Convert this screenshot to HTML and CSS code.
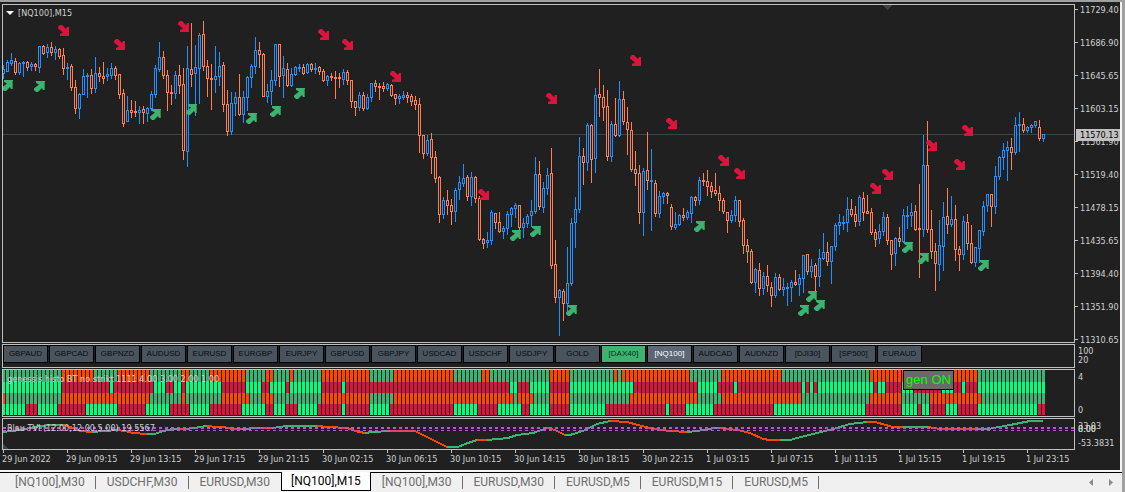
FILE: index.html
```html
<!DOCTYPE html>
<html lang="en">
<head>
<meta charset="utf-8">
<title>[NQ100],M15</title>
<link rel="stylesheet" href="styles.css">
</head>
<body>
<div class="terminal">
  <main class="chart">
    <section class="panel price-panel">
      <svg class="plot" id="price"></svg>
      <h1 class="caption price-caption"><svg class="caret" viewBox="0 0 8 4"><path d="M0 0h8L4 4z"/></svg>[NQ100],M15</h1>
    </section>
    <div class="axis price-axis">
      <span>11729.40</span><span>11686.90</span><span>11645.65</span><span>11603.15</span><span>11561.90</span><span>11519.40</span><span>11478.15</span><span>11435.65</span><span>11394.40</span><span>11351.90</span><span>11310.65</span>
      <output class="last-price">11570.13</output>
    </div>

    <nav class="panel symbols" id="symbols" aria-label="Symbols"></nav>
    <div class="axis symbol-axis"><span>100</span><span>20</span></div>

    <section class="panel">
      <svg class="plot" id="histo"></svg>
      <h2 class="caption">genessis histo BT no strikt 1111 4.00 3.00 2.00 1.00</h2>
      <button class="gen" type="button">gen ON</button>
    </section>
    <div class="axis histo-axis"><span>4</span><span>0</span></div>

    <section class="panel">
      <svg class="plot" id="tvi"></svg>
      <h2 class="caption tvi-caption">Blau TVI (12.00,12.00,5.00) 19.5567</h2>
    </section>
    <div class="axis tvi-axis"><span>33.03</span><span class="level">0.00</span><span class="level">8.00</span><span>-53.3831</span></div>

    <div class="dates" id="dates"></div>
  </main>

  <nav class="tabs" aria-label="Charts">
    <button type="button">[NQ100],M30</button>
    <button type="button">USDCHF,M30</button>
    <button type="button">EURUSD,M30</button>
    <button type="button" class="active" aria-current="page">[NQ100],M15</button>
    <button type="button">[NQ100],M30</button>
    <button type="button">EURUSD,M30</button>
    <button type="button">EURUSD,M5</button>
    <button type="button">EURUSD,M15</button>
    <button type="button">EURUSD,M5</button>
    <div class="scroll">
      <button type="button" aria-label="Scroll left"><svg viewBox="0 0 4 7"><path d="M4 0v7L0 3.500z"/></svg></button>
      <button type="button" aria-label="Scroll right"><svg viewBox="0 0 4 7"><path d="M0 0v7l4-3.500z"/></svg></button>
    </div>
  </nav>
</div>
<script src="chart.js"></script>
</body>
</html>
```
FILE: styles.css
```css
* { box-sizing: border-box; }

body {
  margin: 0;
  background: #a0a0a0;
  font-family: "Liberation Sans", Arial, sans-serif;
}

button {
  margin: 0;
  padding: 0;
  border: 0;
  border-radius: 0;
  background: none;
  font: inherit;
  color: inherit;
}

.terminal {
  display: flex;
  flex-direction: column;
  height: 100vh;
  border-top: 2px solid #a0a0a0;
  overflow: hidden;
}

.chart {
  flex: 1;
  min-height: 0;
  display: grid;
  grid-template-columns: minmax(0, 1fr) 45px;
  grid-template-rows: minmax(0, 1fr) 24px 48px 32px 19px;
  row-gap: 1px;
  margin-right: 3px;
  padding: 2px 0 0 2px;
  border-right: 2px solid #f4f4f4;
  border-bottom: 2px solid #f4f4f4;
  background: #202020;
  color: #d0d0d0;
  font-family: "DejaVu Sans Condensed", "DejaVu Sans", sans-serif;
  font-size: 9px;
  line-height: 12px;
}

.panel {
  position: relative;
  min-width: 0;
  border: 1px solid #c0c0c0;
  overflow: hidden;
}

.plot {
  display: block;
  width: 100%;
  height: 100%;
  shape-rendering: crispEdges;
}

.arrow { shape-rendering: auto; }

.caption {
  position: absolute;
  left: 4px;
  top: 3px;
  margin: 0;
  font-size: inherit;
  font-weight: normal;
  white-space: nowrap;
}

.price-caption {
  display: flex;
  align-items: center;
  gap: 4px;
  left: 3px;
  top: 2px;
}

.caret { width: 8px; height: 4px; fill: #ffffff; }

.axis {
  position: relative;
  display: flex;
  flex-direction: column;
  justify-content: space-between;
  padding-left: 3px;
  white-space: nowrap;
}

.price-axis { padding-left: 5px; margin-bottom: -3px; }

.price-axis span { position: relative; }

.price-axis span::before {
  content: "";
  position: absolute;
  left: -5px;
  top: 5px;
  width: 3px;
  height: 1px;
  background: #c0c0c0;
}

.last-price {
  position: absolute;
  left: 1px;
  right: 0;
  top: 125px;
  padding-left: 4px;
  background: #c0c0c0;
  color: #000000;
}

.symbol-axis { justify-content: center; line-height: 9px; }
.histo-axis { padding-top: 2px; padding-bottom: 1px; }
.tvi-axis { padding-top: 2px; padding-bottom: 1px; }
.level { position: absolute; top: 5px; }

.symbols {
  display: flex;
  align-items: flex-start;
  gap: 1px;
}

.symbols button {
  flex: none;
  width: 45px;
  height: 18px;
  border: 1px solid #000000;
  background: #4a545e;
  color: #080c10;
  font-family: "Liberation Sans", Arial, sans-serif;
  font-size: 8px;
}

.symbols .up { background: #3cb371; color: #0c2c1a; }
.symbols .current { background: #5b6775; color: #ffffff; }

.gen {
  position: absolute;
  left: 900px;
  top: 0;
  width: 51px;
  height: 20px;
  border: 1px solid #000000;
  background: #696969;
  color: #00ff00;
  font-family: "Liberation Sans", Arial, sans-serif;
  font-size: 13px;
}

.dates {
  grid-column: 1 / -1;
  display: flex;
  margin-top: -1px;
  overflow: hidden;
}

.dates span {
  position: relative;
  flex: none;
  width: 64px;
  padding-top: 3px;
  white-space: nowrap;
}

.dates span::before {
  content: "";
  position: absolute;
  left: 1px;
  top: 0;
  width: 1px;
  height: 3px;
  background: #c0c0c0;
}

.tabs {
  flex: none;
  display: flex;
  height: 20px;
  margin-right: 3px;
  padding-left: 4px;
  background: linear-gradient(#000000 1px, #f0f0f0 1px);
  color: #6d6d6d;
  font-family: Roboto, "Noto Sans", sans-serif;
  font-size: 12px;
  line-height: 18px;
}

.tabs > button {
  position: relative;
  flex: none;
  height: 19px;
  padding: 0 11px;
}

.tabs > button::after {
  content: "";
  position: absolute;
  right: 0;
  top: 4px;
  width: 1px;
  height: 13px;
  background: #6d6d6d;
}

.tabs > .active {
  padding: 0 9px;
  border: solid #000000;
  border-width: 0 1px 1px;
  background: #ffffff;
  color: #000000;
}

.tabs > .active::after,
.tabs > button:nth-child(3)::after { display: none; }

.scroll {
  display: flex;
  align-items: center;
  gap: 16px;
  margin-left: auto;
  padding-right: 9px;
}

.scroll button { display: flex; }
.scroll svg { width: 4px; height: 7px; fill: #8a8a8a; }
```
FILE: chart.js
```js
const BLUE = "#1e90ff";
const CORAL = "#ff7f50";
const SEA = "#3cb371";
const SPRING = "#00ff7f";
const ORANGE = "#ff4500";
const CRIMSON = "#dc143c";
const STEP = 4;

// One candle per entry: direction, high, body top, body bottom, low.
const candles = `
U65,69,73,78 U60,62,71,71 U53,60,63,65 D58,61,72,74 U62,63,72,74 U61,62,63,76 D61,62,67,70 U62,64,66,70
D63,64,66,70 U46,46,67,72 D45,46,53,54 U44,47,52,57 D42,47,52,55 U46,49,52,59 D48,49,56,58 D48,55,68,74
U63,67,68,79 D64,66,87,90 D80,87,108,113 U93,94,108,118 U69,76,94,94 U73,75,76,97 D69,75,88,93 U57,73,88,92
D67,73,76,81 D62,76,78,83 U68,74,76,80 U63,68,75,78 D66,68,75,79 D74,74,94,98 D89,93,123,126 U96,110,121,121
D100,110,112,117 D101,111,112,116 U106,110,112,123 D106,109,112,123 U107,108,113,121 U91,94,108,110 U65,68,94,97 U42,57,69,71
D51,57,75,78 D70,75,92,110 D85,92,93,104 U71,75,93,98 D65,75,85,93 D68,84,150,159 U46,68,151,166 D23,69,74,86
U45,67,73,115 U33,35,68,103 D21,34,66,70 D60,66,78,96 D64,78,79,109 U46,76,79,92 U52,66,76,85 D62,65,104,111
D90,104,131,135 U92,103,131,134 U92,97,103,115 D74,97,114,115 U91,97,114,122 U76,77,97,110 U64,66,77,87 U37,50,66,73
D42,50,54,67 D53,54,96,96 U84,91,96,102 U70,80,91,104 U44,44,80,85 D44,44,76,86 U56,68,75,97 D63,69,85,86
U68,74,85,86 U66,67,74,75 U64,67,68,71 D64,67,73,74 U63,64,72,73 D63,64,69,71 U63,68,69,73 D66,67,71,74
D69,71,80,81 U75,76,80,85 D73,76,77,80 D71,77,78,98 D73,77,78,87 U69,72,79,84 D70,72,80,84 D80,80,101,107
D101,101,107,115 U92,95,107,110 D92,95,108,110 U94,97,108,109 U83,83,97,101 D80,83,86,91 D83,86,87,99 D82,86,88,91
U83,84,88,90 D84,85,95,96 D94,94,98,104 U94,96,98,103 U91,95,97,99 D92,95,97,102 D94,96,101,105 D96,100,104,109
D98,104,135,152 D135,135,153,158 U135,140,153,155 D133,139,157,173 D151,157,178,182 D176,177,214,222 U197,200,214,218 D190,200,205,214
D199,205,211,224 U188,190,211,221 U176,182,189,199 U164,178,183,186 D175,177,196,200 U172,177,196,205 D176,177,198,202 D196,198,239,240
D238,239,243,248 U232,240,242,247 U210,212,240,244 D213,213,222,228 D212,222,231,232 U226,228,231,238 U211,214,228,234 U207,208,214,226
U203,205,208,217 D205,205,227,230 U218,223,227,237 U214,216,223,227 U200,211,215,226 U157,174,211,213 D161,174,206,209 U182,188,207,212
U168,175,188,194 D148,173,265,268 D240,264,297,302 U289,290,297,335 D289,291,303,320 U247,283,303,312 U218,223,283,285 U197,209,222,247
U137,156,209,212 D148,156,162,184 U123,125,162,170 D124,125,159,182 U88,95,158,172 D69,94,97,116 D85,97,107,120 D90,106,156,160
U121,124,156,161 D98,124,135,136 U81,99,135,136 D91,99,121,124 D107,122,129,154 D122,130,169,171 D151,169,173,185 D165,173,212,223
U168,171,212,235 D132,170,180,189 U149,180,181,230 D180,183,213,216 U191,196,213,217 U192,193,196,203 D192,193,195,203 D204,207,226,229
U212,224,227,229 U214,215,224,225 D208,215,217,220 U210,212,217,219 U196,197,213,222 D196,197,200,205 U177,180,200,204 D173,180,181,185
D170,181,186,195 D182,186,191,197 D173,190,193,195 D186,193,200,210 D198,200,211,213 D212,212,220,232 U210,215,220,222 U196,200,215,221
D200,200,221,226 D218,220,245,253 D239,245,251,262 D249,251,282,283 U268,269,282,292 D263,270,288,295 U272,276,288,294 D265,276,285,291
D282,287,295,306 U273,277,295,297 D274,277,289,290 U278,287,289,295 U283,287,288,305 U280,282,287,301 D270,282,284,285 U274,278,284,295
U255,255,278,292 D254,254,271,274 U259,266,271,277 D263,265,276,292 U249,258,276,286 U233,252,258,259 D242,252,261,265 U246,246,261,283
U223,225,246,250 U214,222,225,234 U216,222,223,229 U197,209,222,231 D199,209,214,216 D206,214,221,226 U195,197,221,225 D192,198,212,220
D195,211,213,213 D208,212,232,234 D229,232,239,246 U224,231,238,243 U212,217,231,235 D214,217,240,244 D240,240,254,269 U237,238,253,265
D227,238,241,246 U209,215,241,242 U206,215,216,228 U203,212,215,226 D205,211,229,230 D184,228,229,277 U135,165,229,236 D121,165,229,232
D210,229,251,258 D243,251,263,290 U220,245,264,280 U202,217,246,270 D188,216,224,233 U196,219,224,226 D205,219,249,260 D246,249,254,270
U216,221,254,259 D214,222,243,249 D225,243,262,263 U247,247,262,266 U230,230,248,262 U201,206,231,235 U194,194,205,211 D194,194,206,226
U166,176,206,213 U156,157,176,179 U143,150,157,169 U141,147,150,180 D138,147,152,169 U117,125,152,154 U112,124,125,151 D118,124,130,132
U126,127,130,132 U124,125,127,132 U121,121,125,127 D120,127,138,140 U134,134,138,141
`.trim().split(/\s+/);

const sells = [[63,31],[119,45],[183,27],[323,35],[347,45],[395,77],[483,195],[551,99],[635,61],[671,124],[723,161],[739,174],[875,189],[887,175],[931,146],[959,165],[967,131]];
const buys = [[7,85],[39,86],[155,114],[191,109],[251,118],[275,111],[299,93],[515,235],[535,231],[571,310],[699,226],[803,310],[811,296],[819,305],[907,247],[923,258],[983,265]];

const rect = (x, y, w, h, fill) => `<rect x="${x}" y="${y}" width="${w}" height="${h}" fill="${fill}"/>`;

function drawPrice() {
  let out = rect(0, 134, 4000, 1, "#3a4444") + `<path d="M882 5h10l-5 5z" fill="#3a4444"/>`;
  candles.forEach((entry, k) => {
    const x = 3 + STEP * k;
    const color = entry[0] === "U" ? BLUE : CORAL;
    const [high, top, bottom, low] = entry.slice(1).split(",").map(Number);
    out += rect(x, high, 1, low - high + 1, color);
    out += rect(x - 1, top, 3, bottom - top + 1, color);
    if (bottom - top > 1) out += rect(x, top + 1, 1, bottom - top - 1, "#202020");
  });
  const down = "M0 2 2 0H4L8 4 9 2H11V11H2V9L5 7.5 0 3.5Z";
  const up = "M0 9 2 11H4L8 7 9 9H11V0H2V2L5 3.5 0 7.5Z";
  sells.forEach(([x, y]) => { out += `<path class="arrow" transform="translate(${x - 5} ${y - 6})" d="${down}" fill="${CRIMSON}"/>`; });
  buys.forEach(([x, y]) => {
    out += `<g class="arrow" transform="translate(${x - 5} ${y - 5})"><path d="${up}" fill="${SEA}"/><path d="M10 1h1v8h-1z" fill="#2e8b3c"/></g>`;
  });
  document.getElementById("price").innerHTML = `<g transform="translate(-3 -5)">${out}</g>`;
}

// Each row lists the bar index at which the colour flips.
const rows = [
  { y: 370, h: 12, colors: [SEA, ORANGE], flips: [0,15,23,29,37,45,47,52,61,66,68,72,73,80,92,98,113,120,122,137,142,153,154,155,172,180,195,217,244] },
  { y: 382, h: 11, colors: [SPRING, CRIMSON], flips: [0,15,27,28,38,41,43,45,46,55,61,65,67,71,72,80,85,86,127,129,132,137,142,158,174,179,183,184,200,201,202,203,204,218,219,221,225,228,235,238,240,241,244] },
  { y: 393, h: 11, colors: [SEA, ORANGE], flips: [0,0,1,15,37,45,46,55,62,65,68,80,92,98,128,129,133,137,142,157,174,180,200,217,225,232,245].slice(2), first: ORANGE },
  { y: 404, h: 11, colors: [SPRING, CRIMSON], flips: [0,6,9,14,21,29,36,42,47,52,60,66,68,71,74,79,85,86,92,97,113,119,124,130,132,137,142,151,166,167,171,178,193,216,225,229,230,232,236,239,244,259] }
];

function drawHisto() {
  let out = "";
  rows.forEach(({ y, h, colors, flips, first }) => {
    if (first) out += rect(2, y, 3, h, first);
    flips.forEach((start, i) => {
      const end = flips[i + 1] ?? candles.length;
      for (let k = start; k < end; k++) out += rect(2 + STEP * k, y, 3, h, colors[i % 2]);
    });
  });
  document.getElementById("histo").innerHTML = `<g transform="translate(-3 -370)">${out}</g>`;
}

const curve = [
  [SEA, "3,432 20,430 40,426 53,425 62,425"],
  [ORANGE, "62,425 68,426 80,431 92,432"],
  [SEA, "92,432 117,430"],
  [ORANGE, "117,430 125,431 133,433 147,434"],
  [SEA, "147,434 155,434 163,431 173,429 180,429"],
  [ORANGE, "180,429 187,429"],
  [SEA, "187,429 200,427 207,426"],
  [ORANGE, "207,426 217,427 223,427 233,429 242,429"],
  [SEA, "242,429 260,428"],
  [ORANGE, "260,428 272,428"],
  [SEA, "272,428 287,426 317,426"],
  [ORANGE, "317,426 328,427 347,428 355,431 365,433"],
  [SEA, "365,433 372,432 390,431"],
  [ORANGE, "390,431 415,431 447,447"],
  [SEA, "447,447 458,447 465,444 477,440"],
  [ORANGE, "477,440 487,440"],
  [SEA, "487,440 508,438 517,435 533,433 547,428"],
  [ORANGE, "547,428 555,430 565,435"],
  [SEA, "565,435 570,435 583,431 597,424 610,421"],
  [ORANGE, "610,421 627,422 653,429 670,431 687,432"],
  [SEA, "687,432 698,431 707,429 718,428"],
  [ORANGE, "718,428 738,430 750,433 763,439 770,440 780,440"],
  [SEA, "780,440 790,440 797,438 833,429 850,424 867,422"],
  [ORANGE, "867,422 875,422 893,427 903,427"],
  [SEA, "903,427 923,427 928,427"],
  [ORANGE, "928,427 940,429 977,429"],
  [SEA, "977,429 988,429 1010,425 1030,421 1043,421"]
];

function drawTvi() {
  let out = `<path d="M3 444l5 5H3z" fill="#3a4444"/>`;
  curve.forEach(([color, points]) => {
    out += `<polyline points="${points}" fill="none" stroke="${color}" stroke-width="2"/>`;
  });
  out += `<path d="M3 428H4000" stroke="#ba55d3" stroke-width="2" stroke-dasharray="3 3"/>`;
  out += `<path d="M3 430.500H4000" stroke="#ba55d3" stroke-dasharray="3 3"/>`;
  document.getElementById("tvi").innerHTML = `<g transform="translate(-3 -419)">${out}</g>`;
}

const symbols = ["GBPAUD", "GBPCAD", "GBPNZD", "AUDUSD", "EURUSD", "EURGBP", "EURJPY", "GBPUSD", "GBPJPY", "USDCAD", "USDCHF", "USDJPY", "GOLD", "[DAX40]", "[NQ100]", "AUDCAD", "AUDNZD", "[DJI30]", "[SP500]", "EURAUD"];
const marks = { "[DAX40]": "up", "[NQ100]": "current" };
document.getElementById("symbols").innerHTML = symbols
  .map(name => `<button type="button" class="${marks[name] || ""}">${name}</button>`).join("");

const dates = ["29 Jun 2022", "29 Jun 09:15", "29 Jun 13:15", "29 Jun 17:15", "29 Jun 21:15", "30 Jun 02:15", "30 Jun 06:15", "30 Jun 10:15", "30 Jun 14:15", "30 Jun 18:15", "30 Jun 22:15", "1 Jul 03:15", "1 Jul 07:15", "1 Jul 11:15", "1 Jul 15:15", "1 Jul 19:15", "1 Jul 23:15"];
document.getElementById("dates").innerHTML = dates.map(date => `<span>${date}</span>`).join("");

drawPrice();
drawHisto();
drawTvi();
```
